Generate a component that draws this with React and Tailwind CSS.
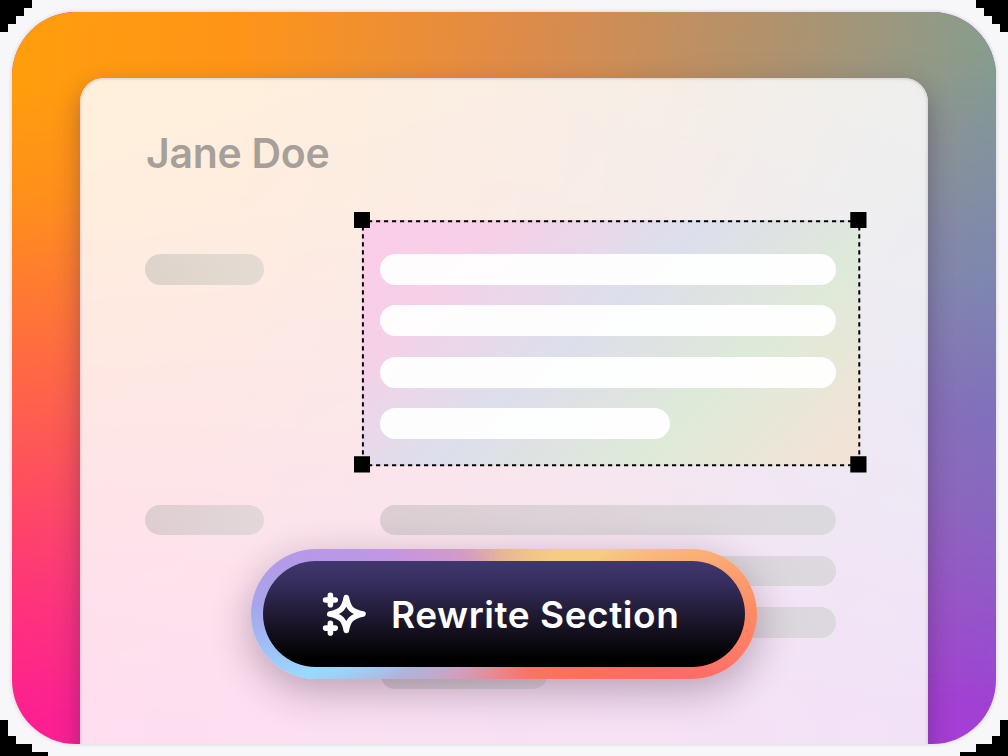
const Bar = ({ className = "w-full" }) => (
  <div className={`h-[30.6px] shrink-0 rounded-full bg-[linear-gradient(90deg,rgba(154,160,156,0.32),rgba(194,200,194,0.44))] ${className}`} />
);

const LightBar = ({ className = "w-full" }) => (
  <div className={`h-[30.8px] shrink-0 rounded-full bg-white/94 ${className}`} />
);

const Corners = () => (
  <svg className="pointer-events-none absolute inset-0" width="1008" height="756" viewBox="0 0 1008 756" shapeRendering="crispEdges">
    <path d="M0 0H32V8H24V16H16V24H8V32H0Z" />
    <path d="M1008 0H976V8H984V16H992V24H1000V32H1008Z" />
    <path d="M0 720H8V736H16V744H32V752H48V756H0Z" />
    <path d="M1008 720H1000V736H992V744H976V752H960V756H1008Z" />
  </svg>
);

const Sparkles = () => (
  <svg width="48" height="48" viewBox="0 0 48 48" fill="none" stroke="white" strokeWidth="5.6" strokeLinecap="round" strokeLinejoin="round">
    <path d="M26.3 7.6C28.2 17.6 31 21.6 43 24C31 26.4 28.2 30.4 26.3 40.4C24.4 30.4 21.6 26.4 9.8 24C21.6 21.6 24.4 17.6 26.3 7.6Z" />
    <path d="M10.4 5.2V14.8M5.6 10H15.2M10.4 33.3V42.9M5.6 38.1H15.2" />
  </svg>
);

const SelectionFrame = () => (
  <svg className="absolute -left-2 -top-2" width="514" height="262" viewBox="0 0 514 262">
    <path d="M14 9.2H500M14 253.3H500" stroke="black" strokeWidth="2" strokeDasharray="4.2 3.8" />
    <path d="M8.9 14.2V250M505.3 14.2V250" stroke="black" strokeWidth="2" strokeDasharray="4.2 3.8" />
    <path d="M0 0H16V16H0ZM496.3 0H512.5V16H496.3ZM0 244.3H16V260.5H0ZM496.3 244.3H512.5V260.5H496.3Z" />
  </svg>
);

export default function App() {
  return (
    <main className="relative h-[756px] w-[1008px] overflow-hidden bg-[#f7f7f9] p-3 font-['Inter',sans-serif]">
      <section className="relative h-[732px] w-[984px] overflow-hidden rounded-[64px] bg-[linear-gradient(90deg,#ff1e90_0%,#e82ba6_30%,#c338be_65%,#a13fd8_100%)] shadow-[0_0_4px_rgba(40,40,80,0.2)]">
        <div className="h-full bg-[linear-gradient(95deg,#ff9e0c_0%,#ff9418_22%,#df8b48_48%,#b0926d_73%,#7f9f95_98%)] [mask-image:linear-gradient(180deg,black_10%,rgba(0,0,0,0.9)_25%,rgba(0,0,0,0.55)_52%,rgba(0,0,0,0.2)_78%,transparent_97%)]" />
        <div className="absolute inset-0 bg-[linear-gradient(180deg,transparent_5%,#7888b6_36%,#7a70c0_55%,transparent_95%)] opacity-70 [mask-image:linear-gradient(90deg,transparent_60%,black)]" />
        <div className="absolute inset-0 pl-[68px] pt-[66px]">
          <article className="h-[700px] w-[848px] rounded-3xl bg-white/85 pl-[66px] pt-[50px] shadow-[0_10px_24px_rgba(40,20,60,0.34),inset_0_0_0_1.5px_rgba(222,216,218,0.85),inset_0_0_4px_rgba(150,140,140,0.3)]">
            <h1 className="h-[92px] text-[41px] font-semibold leading-[50px] tracking-[-0.3px] text-[#8e8b88]/80">Jane Doe</h1>
            <div className="flex">
              <div className="-ml-px flex w-[217px] flex-col gap-[220px] pt-[34px]">
                <Bar className="w-[119px]" />
                <Bar className="w-[119px]" />
              </div>
              <div>
                <div className="relative flex h-[246px] w-[498px] flex-col gap-[20.7px] bg-[linear-gradient(138deg,#fbcde9_0%,#f7cfe7_18%,#e7d9ea_34%,#dcdfec_44%,#dfe2e2_56%,#deead9_70%,#e8e7d7_82%,#f5e2d7_100%)] pl-[18px] pr-6 pt-[34px]">
                  <LightBar />
                  <LightBar />
                  <LightBar />
                  <LightBar className="w-[290px]" />
                  <SelectionFrame />
                </div>
                <div className="flex flex-col gap-[20.6px] pl-[18px] pr-6 pt-[38.6px]">
                  <Bar />
                  <Bar />
                  <Bar />
                  <Bar className="w-[168px]" />
                </div>
              </div>
            </div>
          </article>
        </div>
        <button className="absolute left-[239px] top-[537px] h-[130px] w-[506px] rounded-full bg-[conic-gradient(#e8b795_0deg,#f6cc83_40deg,#f6cc83_58deg,#f9b478_71deg,#ff8964_90deg,#ff6b68_109deg,#ff7057_130deg,#fa7468_160deg,#e58c9b_195deg,#d09fbe_218deg,#b0b4dc_240deg,#98d9ff_253deg,#a7a4eb_272deg,#b798e8_287deg,#c996dc_302deg,#d39bc4_325deg,#e8b795_360deg)] p-3 shadow-[0_12px_40px_rgba(50,20,50,0.32)]">
          <span className="flex h-full items-center rounded-full bg-[linear-gradient(180deg,#40376d_0%,#352d5c_22%,#15111f_65%,#000_92%)] pl-[57px] text-white">
            <Sparkles />
            <span className="ml-[23px] whitespace-nowrap text-[37px] font-semibold leading-none tracking-[0.55px]">Rewrite Section</span>
          </span>
        </button>
      </section>
      <Corners />
    </main>
  );
}
